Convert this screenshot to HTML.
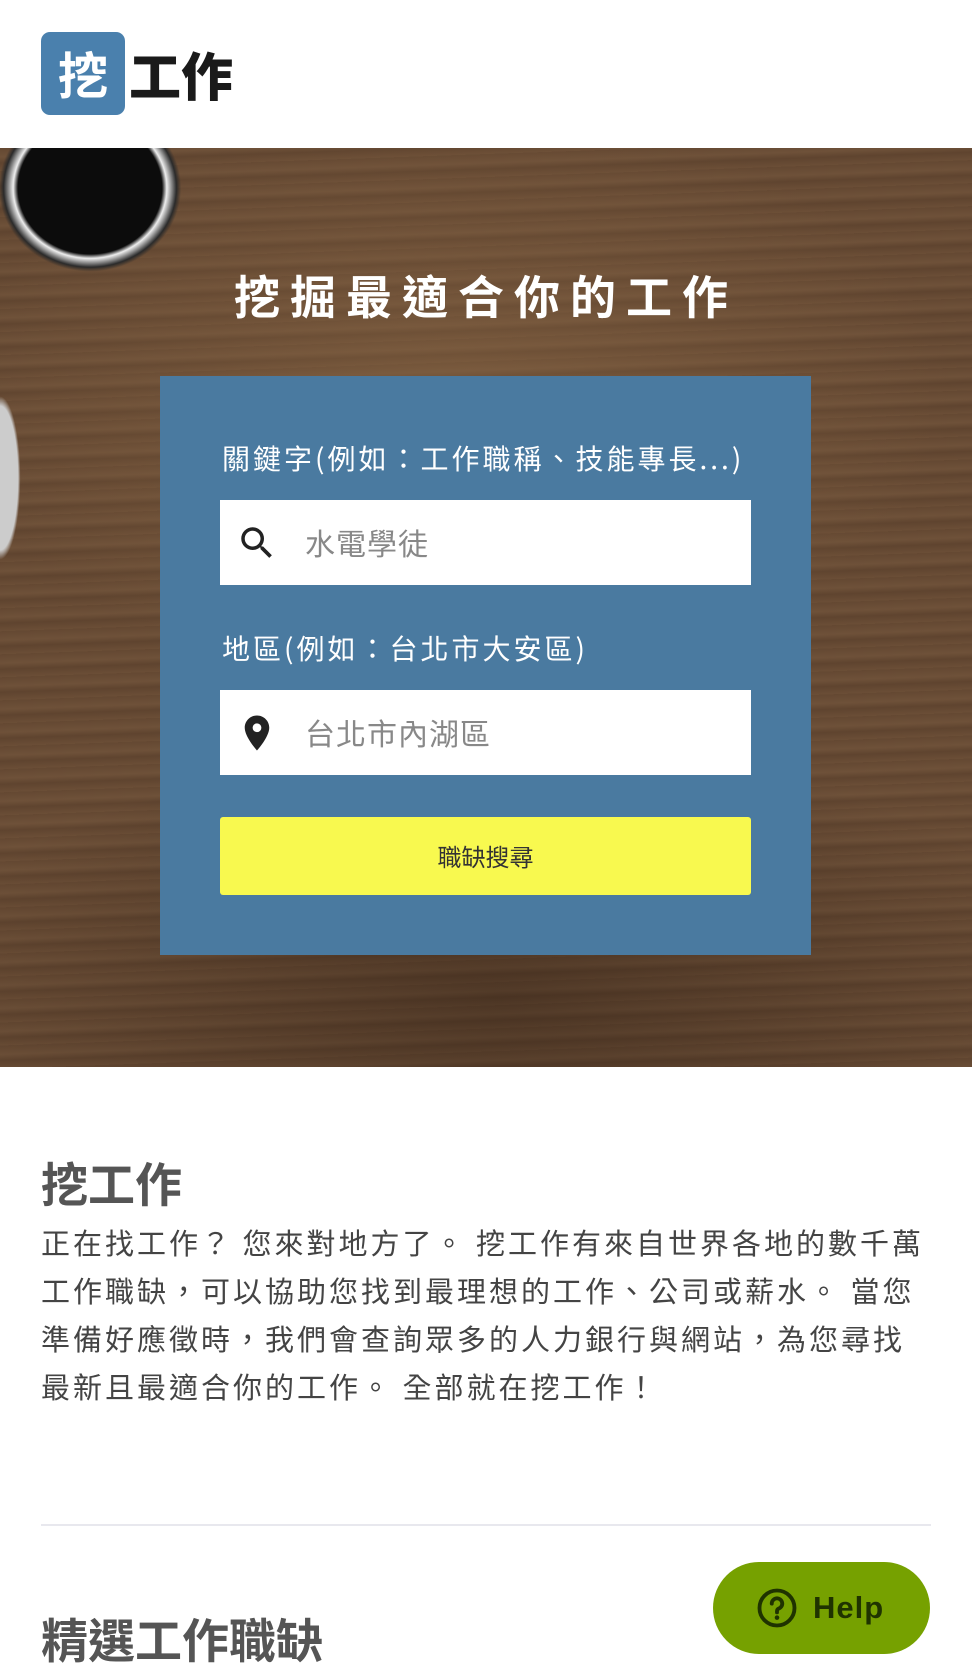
<!DOCTYPE html>
<html><head><meta charset="utf-8"><style>
*{margin:0;padding:0;box-sizing:border-box}
body{width:972px;height:1680px;overflow:hidden;background:#fff;font-family:"Noto Sans CJK TC","Liberation Sans",sans-serif;position:relative}
.logo{position:absolute;left:41px;top:32px;width:84px;height:83px;background:#4a80ad;border-radius:9px;color:#fff;font-weight:bold;font-size:50px;line-height:83px;text-align:center}
.logot{position:absolute;left:129px;top:42px;font-size:52px;font-weight:900;color:#1a1a1a;line-height:64px}
.hero{position:absolute;left:0;top:148px;width:972px;height:919px;background:
radial-gradient(ellipse 120px 110px at 90px 40px,#0c0c0c 60%,#eee 64%,#2a2a2a 72%,transparent 76%),
radial-gradient(ellipse 30px 120px at 0px 330px,#ccc 60%,transparent 68%),
radial-gradient(ellipse 500px 300px at 450px 250px,rgba(140,105,70,.45),transparent),
radial-gradient(ellipse 600px 250px at 500px 850px,rgba(40,25,15,.4),transparent),
repeating-linear-gradient(178deg,rgba(90,64,44,.5) 0px,rgba(110,82,58,.5) 9px,rgba(80,56,38,.5) 15px,rgba(104,76,53,.5) 23px),
#6e5038}
.title{position:absolute;left:0;width:972px;top:262px;text-align:center;color:#fff;font-size:46px;font-weight:bold;letter-spacing:10px;z-index:2}
.box{position:absolute;left:160px;top:376px;width:651px;height:579px;background:#4a7aa0;z-index:2}
.lab{position:absolute;left:62px;color:#fff;font-size:28px;line-height:40px;letter-spacing:3px;white-space:nowrap}
.inp{position:absolute;left:60px;width:531px;height:85px;background:#fff;color:#888;font-size:30px;line-height:85px;padding-left:85px;letter-spacing:1px}
.inp svg{position:absolute;left:16px;top:22px}
.btn{position:absolute;left:60px;top:441px;width:531px;height:78px;background:#f8f94f;border-radius:3px;text-align:center;line-height:78px;font-size:24px;color:#333}
h2{position:absolute;left:41px;font-size:47px;font-weight:bold;color:#555;line-height:60px}
p{position:absolute;left:41px;top:1218px;width:890px;font-size:29px;line-height:48px;color:#444;letter-spacing:3px}
.hr{position:absolute;left:41px;top:1524px;width:890px;height:2px;background:#e8e8ee}
.help{position:absolute;left:713px;top:1562px;width:217px;height:92px;border-radius:46px;background:#76a100;color:#1f3300;font-family:"Liberation Sans",sans-serif;font-weight:bold;font-size:31px;line-height:92px;padding-left:100px;letter-spacing:1px}
.help svg{position:absolute;left:43px;top:25px}
</style></head><body>
<div class="logo">挖</div><div class="logot">工作</div>
<div class="hero"></div>
<div class="title">挖掘最適合你的工作</div>
<div class="box">
<div class="lab" style="top:62px">關鍵字(例如：工作職稱、技能專長...)</div>
<div class="inp" style="top:124px"><svg width="42" height="42" viewBox="0 0 24 24"><path fill="#222" d="M15.5 14h-.79l-.28-.27A6.47 6.47 0 0 0 16 9.5 6.5 6.5 0 1 0 9.5 16c1.61 0 3.090-.59 4.23-1.57l.27.28v.79l5 4.99L20.49 19l-4.99-5zm-6 0C7.01 14 5 11.99 5 9.5S7.01 5 9.5 5 14 7.01 14 9.5 11.99 14 9.5 14z"/></svg>水電學徒</div>
<div class="lab" style="top:252px">地區(例如：台北市大安區)</div>
<div class="inp" style="top:314px"><svg width="42" height="42" viewBox="0 0 24 24"><path fill="#222" d="M12 2C8.13 2 5 5.13 5 9c0 5.25 7 13 7 13s7-7.75 7-13c0-3.870-3.13-7-7-7zm0 9.5a2.5 2.5 0 0 1 0-5 2.5 2.5 0 0 1 0 5z"/></svg>台北市內湖區</div>
<div class="btn">職缺搜尋</div>
</div>
<h2 style="top:1152px">挖工作</h2>
<p>正在找工作？ 您來對地方了。 挖工作有來自世界各地的數千萬工作職缺，可以協助您找到最理想的工作、公司或薪水。 當您準備好應徵時，我們會查詢眾多的人力銀行與網站，為您尋找最新且最適合你的工作。 全部就在挖工作！</p>
<div class="hr"></div>
<h2 style="top:1608px">精選工作職缺</h2>
<div class="help"><svg width="42" height="42" viewBox="0 0 24 24"><circle cx="12" cy="12" r="10" fill="none" stroke="#1f3300" stroke-width="2.2"/><path d="M9 9.5a3 3 0 1 1 4 2.8c-.7.3-1 .8-1 1.5v.7" fill="none" stroke="#1f3300" stroke-width="2.2" stroke-linecap="round"/><circle cx="12" cy="17.5" r="1.3" fill="#1f3300"/></svg>Help</div>
</body></html>
